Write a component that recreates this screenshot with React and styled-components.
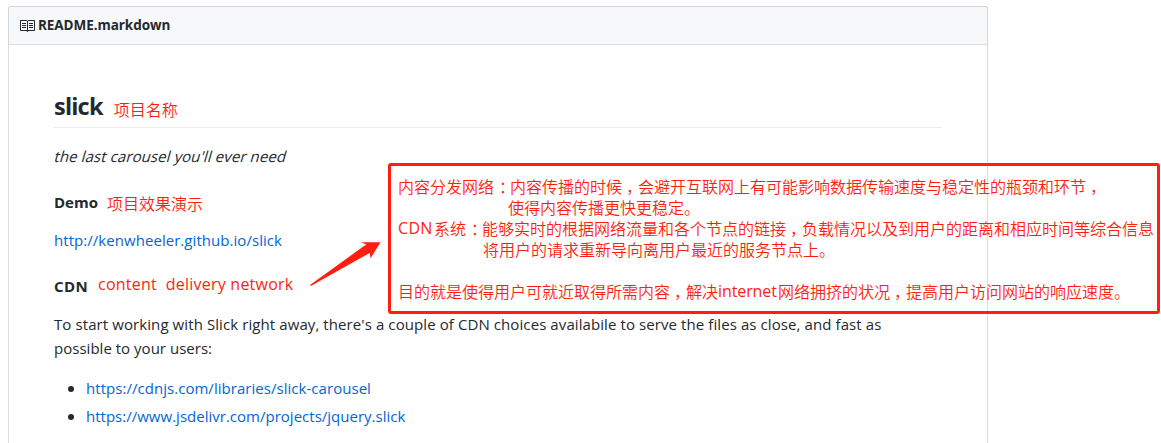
import React from 'react';
import styled, { createGlobalStyle } from 'styled-components';

const latin = '"Open Sans", "Noto Sans CJK SC", sans-serif';
const red = '#ff1e10';

const GlobalStyle = createGlobalStyle`
  * { box-sizing: border-box; }
  body { margin: 0; background: #fff; color: #24292e; font-family: ${latin}; overflow: hidden; }
`;

const Page = styled.div`
  position: relative;
  height: 443px;
  padding: 6px 0 0 8px;
  overflow: hidden;
`;

const FileBox = styled.section`
  width: 980px;
`;

const FileHeader = styled.header`
  display: flex;
  align-items: center;
  gap: 3px;
  height: 39px;
  padding: 0 10px;
  background: #f6f8fa;
  border: 1px solid #d1d5da;
  border-bottom-color: #dcdee0;
  border-radius: 3px 3px 0 0;
`;

const FileName = styled.h2`
  margin: 0;
  padding-bottom: 1px;
  font-size: 13.5px;
  line-height: 20px;
  font-weight: 700;
  letter-spacing: ${p => p.$track}px;
`;

const Article = styled.article`
  height: 420px;
  padding: 45px 45px 0;
  border: solid #ddd;
  border-width: 0 1px;
`;

const Title = styled.h1`
  display: flex;
  align-items: center;
  gap: 11px;
  height: 38px;
  margin: 0 0 16px;
  padding-bottom: 6px;
  border-bottom: 1px solid #eaecef;
  font-size: 23.5px;
  line-height: 30px;
  font-weight: 700;
`;

const Heading = styled.h3`
  display: flex;
  align-items: center;
  gap: ${p => p.$gap}px;
  height: 20px;
  margin: 24px 0 16px;
  font-size: 15px;
  line-height: 20px;
  font-weight: 700;
`;

const Track = styled.span`
  letter-spacing: ${p => p.$by}px;
`;

const Note = styled.span`
  font-size: ${p => p.$size || 16}px;
  line-height: 20px;
  font-weight: ${p => (p.$size ? 400 : 350)};
  color: ${red};
  letter-spacing: ${p => p.$by || 0}px;
  padding-top: ${p => p.$drop || 0}px;
  padding-bottom: ${p => p.$lift || 0}px;
  white-space: pre;
`;

const Text = styled.p`
  margin: 0 0 16px;
  font-size: 15px;
  line-height: 24px;
  white-space: nowrap;
`;

const Tagline = styled.em`
  display: inline-block;
  margin-left: 1px;
  font-style: normal;
  letter-spacing: ${p => p.$by}px;
  transform: skewX(-16deg);
`;

const Link = styled.a`
  color: #0366d6;
  text-decoration: none;
  letter-spacing: ${p => p.$by}px;
`;

const List = styled.ul`
  display: flex;
  flex-direction: column;
  gap: 4px;
  margin: 0;
  padding-left: 32px;
  font-size: 15px;
  line-height: 24px;

  li { height: 24px; }
  li::marker { font-size: 16px; }
`;

const Callout = styled.aside`
  position: absolute;
  left: 388px;
  top: 163px;
  width: 772px;
  height: 151px;
  padding: 10px 0 0 7px;
  border: 3px solid ${red};
  border-radius: 3px;
  color: ${red};
`;

const Line = styled.div`
  display: flex;
  height: 21px;
  padding-left: ${p => p.$indent || 0}px;
  font-family: "Noto Sans CJK SC", sans-serif;
  font-size: 16px;
  line-height: 21px;
  font-weight: 350;
  white-space: nowrap;
`;

const Latin = styled.span`
  width: ${p => p.$width}px;
  font-family: ${latin};
  font-size: 16px;
  font-weight: 400;
  letter-spacing: ${p => p.$by}px;
`;

const Mark = styled.span`
  width: 16px;
  padding-left: ${p => p.$by}px;
  font-feature-settings: "halt";
`;

const Arrow = styled.svg`
  position: absolute;
  left: 300px;
  top: 232px;
`;

const Comma = () => <Mark $by={4}>，</Mark>;
const Colon = () => <Mark $by={5}>：</Mark>;

const BookIcon = () => (
  <svg width="16" height="16" viewBox="0 0 16 16" fill="#24292e" aria-hidden="true">
    <path fillRule="evenodd" d="M3 5h4v1H3V5zm0 3h4V7H3v1zm0 2h4V9H3v1zm11-5h-4v1h4V5zm0 2h-4v1h4V7zm0 2h-4v1h4V9zm2-6v9c0 .55-.45 1-1 1H9.500l-1 1-1-1H2c-.55 0-1-.45-1-1V3c0-.55.45-1 1-1h5.500l1 1 1-1H15c.55 0 1 .45 1 1zm-8 .500L7.500 3H2v9h6V3.500zm7-.500H9.500l-.500.500V12h6V3z" />
  </svg>
);

export default function App() {
  return (
    <>
      <GlobalStyle />
      <Page>
        <FileBox>
          <FileHeader>
            <BookIcon />
            <FileName $track={-0.06}>README.markdown</FileName>
          </FileHeader>
          <Article>
            <Title>
              <Track $by={-0.8}>slick</Track>
              <Note $drop={8}>项目名称</Note>
            </Title>
            <Text><Tagline $by={0.09}>the last carousel you'll ever need</Tagline></Text>
            <Heading $gap={9}>
              <Track $by={0}>Demo</Track>
              <Note $drop={3}>项目效果演示</Note>
            </Heading>
            <Text><Link $by={0.05} href="#demo">http://kenwheeler.github.io/slick</Link></Text>
            <Heading $gap={10}>
              <Track $by={0.4}>CDN</Track>
              <Note $size={16} $by={0.23} $lift={4}>content  delivery network</Note>
            </Heading>
            <Text>
              <Track $by={0.09}>To start working with Slick right away, there's a couple of CDN choices availabile to serve the files as close, and fast as</Track>
              <br />
              <Track $by={0.02}>possible to your users:</Track>
            </Text>
            <List>
              <li><Link $by={0.04} href="#cdnjs">https://cdnjs.com/libraries/slick-carousel</Link></li>
              <li><Link $by={0.01} href="#jsdelivr">https://www.jsdelivr.com/projects/jquery.slick</Link></li>
            </List>
          </Article>
        </FileBox>
        <Callout>
          <Line>内容分发网络<Colon />内容传播的时候<Comma />会避开互联网上有可能影响数据传输速度与稳定性的瓶颈和环节<Comma /></Line>
          <Line $indent={110}>使得内容传播更快更稳定。</Line>
          <Line><Latin $width={36} $by={0.3}>CDN</Latin>系统<Colon />能够实时的根据网络流量和各个节点的链接<Comma />负载情况以及到用户的距离和相应时间等综合信息</Line>
          <Line $indent={85}>将用户的请求重新导向离用户最近的服务节点上。</Line>
          <Line />
          <Line>目的就是使得用户可就近取得所需内容<Comma />解决<Latin $width={60} $by={-0.1}>internet</Latin>网络拥挤的状况<Comma />提高用户访问网站的响应速度。</Line>
        </Callout>
        <Arrow width="90" height="60" viewBox="0 0 90 60" aria-hidden="true">
          <path d="M10 53 64 14 66.500 12.800 61.500 10.200 80.500 10.200 70.600 26.300 69.600 21 10.800 54Z" fill={red} />
        </Arrow>
      </Page>
    </>
  );
}
